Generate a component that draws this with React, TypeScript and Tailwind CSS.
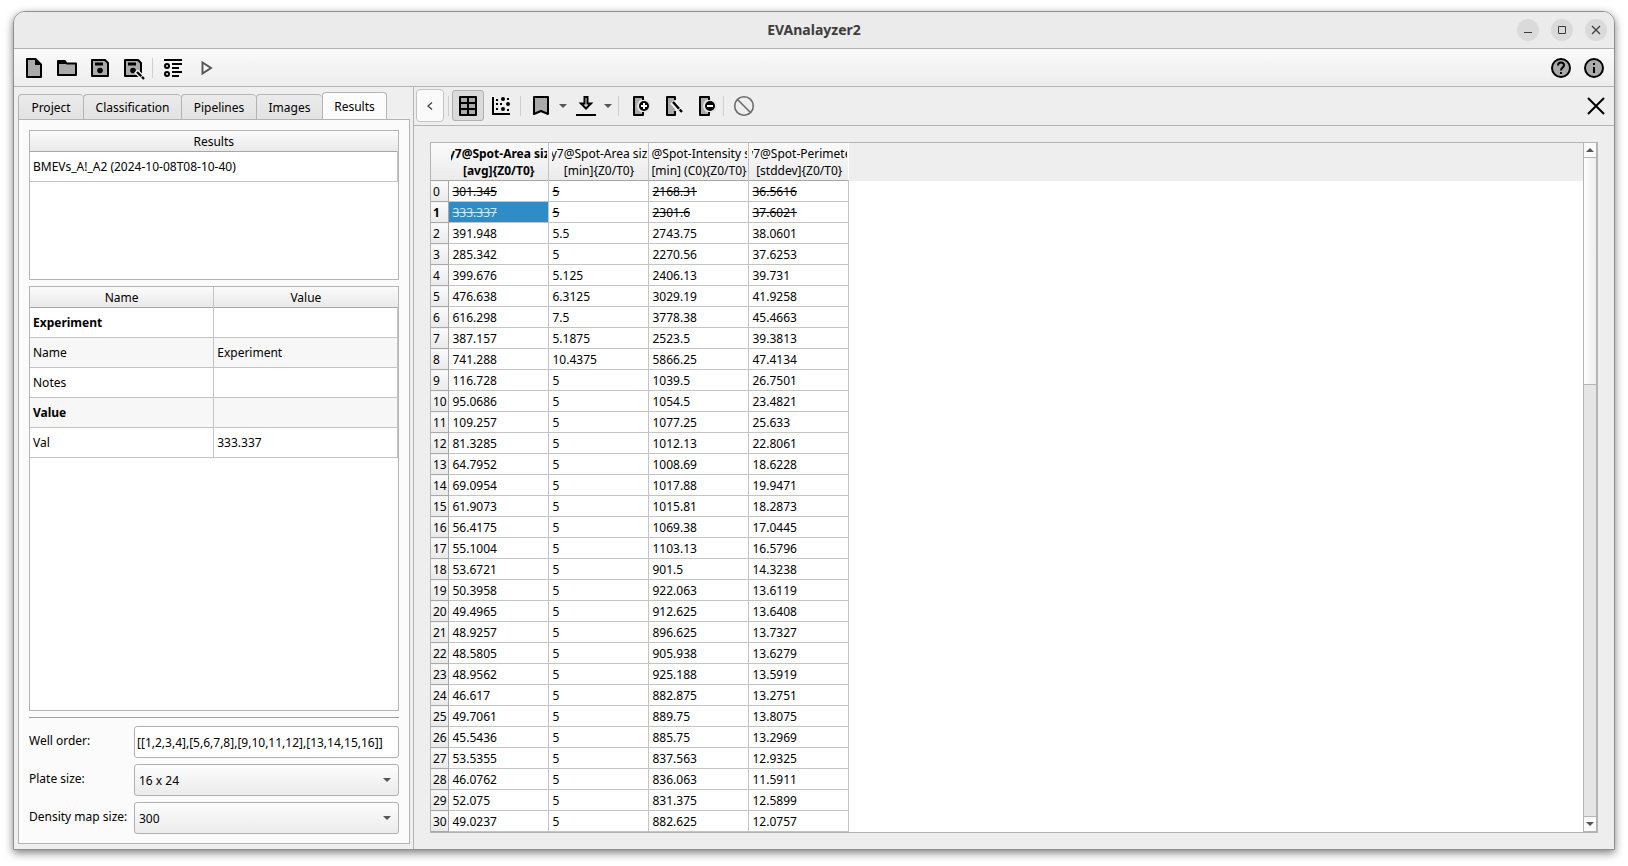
import type { ReactNode } from 'react'

type Row = [string, string, string, string]

const ROWS: Row[] = [
  ['301.345', '5', '2168.31', '36.5616'],
  ['333.337', '5', '2301.6', '37.6021'],
  ['391.948', '5.5', '2743.75', '38.0601'],
  ['285.342', '5', '2270.56', '37.6253'],
  ['399.676', '5.125', '2406.13', '39.731'],
  ['476.638', '6.3125', '3029.19', '41.9258'],
  ['616.298', '7.5', '3778.38', '45.4663'],
  ['387.157', '5.1875', '2523.5', '39.3813'],
  ['741.288', '10.4375', '5866.25', '47.4134'],
  ['116.728', '5', '1039.5', '26.7501'],
  ['95.0686', '5', '1054.5', '23.4821'],
  ['109.257', '5', '1077.25', '25.633'],
  ['81.3285', '5', '1012.13', '22.8061'],
  ['64.7952', '5', '1008.69', '18.6228'],
  ['69.0954', '5', '1017.88', '19.9471'],
  ['61.9073', '5', '1015.81', '18.2873'],
  ['56.4175', '5', '1069.38', '17.0445'],
  ['55.1004', '5', '1103.13', '16.5796'],
  ['53.6721', '5', '901.5', '14.3238'],
  ['50.3958', '5', '922.063', '13.6119'],
  ['49.4965', '5', '912.625', '13.6408'],
  ['48.9257', '5', '896.625', '13.7327'],
  ['48.5805', '5', '905.938', '13.6279'],
  ['48.9562', '5', '925.188', '13.5919'],
  ['46.617', '5', '882.875', '13.2751'],
  ['49.7061', '5', '889.75', '13.8075'],
  ['45.5436', '5', '885.75', '13.2969'],
  ['53.5355', '5', '837.563', '12.9325'],
  ['46.0762', '5', '836.063', '11.5911'],
  ['52.075', '5', '831.375', '12.5899'],
  ['49.0237', '5', '882.625', '12.0757'],
]

const COLUMNS = [
  { name: 'y7@Spot-Area siz', unit: '[avg]{Z0/T0}', align: 'justify-center' },
  { name: 'y7@Spot-Area siz', unit: '[min]{Z0/T0}', align: 'justify-center' },
  { name: '@Spot-Intensity s', unit: '[min] (C0){Z0/T0}', align: 'justify-start' },
  { name: 'y7@Spot-Perimete', unit: '[stddev]{Z0/T0}', align: 'justify-center' },
]

const DETAILS = [
  { name: 'Experiment', value: '', group: true },
  { name: 'Name', value: 'Experiment' },
  { name: 'Notes', value: '' },
  { name: 'Value', value: '', group: true },
  { name: 'Val', value: '333.337' },
]

const TABS = [
  { name: 'Project', width: 'w-[65px]' },
  { name: 'Classification', width: 'w-[98px]' },
  { name: 'Pipelines', width: 'w-[75px]' },
  { name: 'Images', width: 'w-[66px]' },
  { name: 'Results', width: 'w-[65px]' },
]

const SELECTED_ROW = 1
const EXCLUDED_ROWS = [0, 1]

const HEAD_BG = 'bg-linear-to-b from-[#fbfbfb] to-[#e9e9e9]'

function Icon({ children }: { children: ReactNode }) {
  return (
    <svg viewBox="0 0 24 24" className="size-6 shrink-0" fill="none" stroke="#000" strokeWidth="2" aria-hidden>
      {children}
    </svg>
  )
}

function ToolButton({ label, children }: { label: string; children: ReactNode }) {
  return (
    <button aria-label={label} className="flex size-[33px] shrink-0 items-center justify-center">
      <Icon>{children}</Icon>
    </button>
  )
}

function Separator() {
  return <div className="h-5 w-px shrink-0 bg-[#cfcfcf]" />
}

function Caret({ up = false }: { up?: boolean }) {
  return (
    <svg viewBox="0 0 8 4" className="h-1 w-2 shrink-0" fill="#555" aria-hidden>
      <path d={up ? 'M0 4L4 0L8 4Z' : 'M0 0H8L4 4Z'} />
    </svg>
  )
}

function WindowButton({ label, children }: { label: string; children: ReactNode }) {
  return (
    <button aria-label={label} className="flex size-[22px] items-center justify-center rounded-full bg-[#dadada]">
      <svg viewBox="0 0 10 10" className="size-[10px]" fill="none" stroke="#3d3d3d" aria-hidden>
        {children}
      </svg>
    </button>
  )
}

function TitleBar() {
  return (
    <header className="grid h-[37px] grid-cols-[1fr_auto_1fr] items-center border-b border-[#b4b4b4] bg-[#ebebeb] px-[7px]">
      <div />
      <h1 className="text-sm font-bold text-[#3d3d3d]">EVAnalayzer2</h1>
      <div className="flex justify-end gap-3">
        <WindowButton label="Minimize">
          <path d="M1 7.5H9" />
        </WindowButton>
        <WindowButton label="Maximize">
          <path d="M1.5 1.5H8.5V8.5H1.5Z" />
        </WindowButton>
        <WindowButton label="Close window">
          <path d="M1 1L9 9M9 1L1 9" strokeWidth="1.3" />
        </WindowButton>
      </div>
    </header>
  )
}

function DiskShape() {
  return (
    <>
      <path d="M4 4H17L20 7V20H4Z" fill="#aaa" strokeLinejoin="round" />
      <path d="M7 8H15" strokeWidth="3" />
      <circle cx="12" cy="14.5" r="2.8" fill="#000" stroke="none" />
    </>
  )
}

function MainToolbar() {
  return (
    <div className="flex h-[38px] items-center border-b border-[#b4b4b4] bg-linear-to-b from-[#fafafa] to-[#ededed] pt-px pr-1 pl-[3px]">
      <ToolButton label="New">
        <path d="M5 3H13.5L19 8.5V21H5Z" fill="#aaa" strokeLinejoin="round" />
        <path d="M13 3V9H19L13 3Z" fill="#000" stroke="none" />
      </ToolButton>
      <ToolButton label="Open">
        <path d="M3 5H9.5L11.5 7.5H21V19H3Z" fill="#aaa" strokeLinejoin="round" />
        <path d="M3 4H10L12 6.5V8H3Z" fill="#000" stroke="none" />
      </ToolButton>
      <ToolButton label="Save">
        <DiskShape />
      </ToolButton>
      <ToolButton label="Save as">
        <DiskShape />
        <path d="M15 15L23 23" stroke="#f2f2f2" strokeWidth="5" />
        <path d="M16 16L23 23" strokeDasharray="6 1 4" strokeWidth="2.4" />
      </ToolButton>
      <div className="w-[3px]" />
      <Separator />
      <div className="w-[3px]" />
      <ToolButton label="Pipeline list">
        <path d="M3 4H21M11 8H21M11 12H18M11 16H21M11 20H18" />
        <circle cx="6" cy="10" r="2" />
        <circle cx="6" cy="18" r="2" />
      </ToolButton>
      <ToolButton label="Run">
        <path d="M8.5 6.5V17.5L17 12Z" stroke="#555" strokeWidth="1.9" />
      </ToolButton>
      <div className="grow" />
      <ToolButton label="Help">
        <circle cx="12" cy="12" r="9" fill="#aaa" />
        <path d="M9 9.5C9 5.5 15 5.5 15 9.2C15 11.5 12 11.7 12 14.5M12 16V18" />
      </ToolButton>
      <ToolButton label="About">
        <circle cx="12" cy="12" r="9" fill="#aaa" />
        <path d="M12 7V9M12 11V17" />
      </ToolButton>
    </div>
  )
}

function TabBar() {
  return (
    <div role="tablist" className="-mb-px flex h-7 items-end">
      {TABS.map((tab) => {
        const active = tab.name === 'Results'
        return (
          <button
            key={tab.name}
            role="tab"
            aria-selected={active}
            className={`shrink-0 rounded-t-sm border border-[#b4b4b4] ${tab.width} ${
              active
                ? 'h-7 border-b-0 bg-[#fcfcfc] pt-px'
                : 'h-[26px] border-r-0 bg-linear-to-b from-[#ebebeb] to-[#e2e2e2] pt-[2px]'
            }`}
          >
            {tab.name}
          </button>
        )
      })}
    </div>
  )
}

function ResultsList() {
  return (
    <div className="h-[150px] shrink-0 border border-[#b4b4b4] bg-white">
      <table className="w-full border-collapse">
        <thead>
          <tr className={`h-[21px] border-b border-[#a8a8a8] ${HEAD_BG}`}>
            <th className="pt-[2px] font-normal">Results</th>
          </tr>
        </thead>
        <tbody>
          <tr className="h-[30px]">
            <td className="border-r border-b border-[#c4c4c4] px-[3px]">BMEVs_A!_A2 (2024-10-08T08-10-40)</td>
          </tr>
        </tbody>
      </table>
    </div>
  )
}

function DetailsTable() {
  return (
    <div className="min-h-0 grow border border-[#b4b4b4] bg-white">
      <table className="w-full table-fixed border-collapse">
        <thead>
          <tr className={`h-[21px] border-b border-[#a8a8a8] ${HEAD_BG}`}>
            <th className="border-r border-[#c4c4c4] pt-[2px] font-normal">Name</th>
            <th className="pt-[2px] font-normal">Value</th>
          </tr>
        </thead>
        <tbody>
          {DETAILS.map((item, i) => (
            <tr key={item.name + i} className="h-[30px] even:bg-[#f7f7f7]">
              <td className={`border-r border-b border-[#c4c4c4] px-[3px] ${item.group ? 'font-bold' : ''}`}>
                {item.name}
              </td>
              <td className="border-r border-b border-[#c4c4c4] px-[3px]">{item.value}</td>
            </tr>
          ))}
        </tbody>
      </table>
    </div>
  )
}

function SelectRow({ id, label, value }: { id: string; label: string; value: string }) {
  return (
    <>
      <label htmlFor={id} className="pb-[2px]">
        {label}
      </label>
      <div className="relative">
        <select
          id={id}
          defaultValue={value}
          className="h-8 w-full appearance-none rounded-[3px] border border-[#b0b0b0] bg-linear-to-b from-[#fdfdfd] to-[#ebebeb] px-1 pt-[2px]"
        >
          <option>{value}</option>
        </select>
        <div className="pointer-events-none absolute inset-y-0 right-2 flex items-center">
          <Caret />
        </div>
      </div>
    </>
  )
}

function Sidebar() {
  return (
    <aside className="flex w-[400px] shrink-0 flex-col border-r border-[#b4b4b4] bg-[#efefef] pt-[5px] pr-[3px] pb-[5px] pl-1">
      <TabBar />
      <div className="flex min-h-0 grow flex-col border border-[#b4b4b4] bg-[#fbfbfb] px-[10px] pt-[10px] pb-[9px]">
        <ResultsList />
        <div className="h-[6px] shrink-0" />
        <DetailsTable />
        <hr className="mt-[6px] mb-2 border-[#a0a0a0]" />
        <form className="grid grid-cols-[100px_1fr] items-center gap-x-[5px] gap-y-[6px]">
          <label htmlFor="well-order" className="pb-[2px]">
            Well order:
          </label>
          <input
            id="well-order"
            defaultValue="[[1,2,3,4],[5,6,7,8],[9,10,11,12],[13,14,15,16]]"
            className="h-8 w-full rounded-[3px] border border-[#b0b0b0] bg-white px-[2px]"
          />
          <SelectRow id="plate-size" label="Plate size:" value="16 x 24" />
          <SelectRow id="density" label="Density map size:" value="300" />
        </form>
      </div>
    </aside>
  )
}

function ResultsToolbar() {
  return (
    <div className="flex h-[39px] shrink-0 items-center border-b border-[#b4b4b4] pr-[2px] pl-[2px]">
      <button
        aria-label="Back"
        className="mr-1 flex h-[33px] w-7 items-center justify-center rounded-sm border border-[#c4c4c4] bg-[#fafafa]"
      >
        <svg viewBox="0 0 6 8" className="h-2 w-[6px]" fill="none" stroke="#444" strokeWidth="1.3" aria-hidden>
          <path d="M5 0.5L1 4L5 7.5" />
        </svg>
      </button>
      <Separator />
      <button
        aria-label="Table view"
        className="ml-[3px] flex h-[31px] w-8 items-center justify-center rounded-[3px] border border-[#b0b0b0] bg-[#dadada]"
      >
        <Icon>
          <path d="M4 3H20V21H4Z" fill="#aaa" strokeLinejoin="round" />
          <path d="M4 9H20M4 15H20M12 3V21" />
        </Icon>
      </button>
      <ToolButton label="Chart view">
        <path d="M4 3V20H21" />
        <g fill="#000" stroke="none">
          <circle cx="14" cy="5" r="2" />
          <circle cx="19" cy="10" r="2" />
          <circle cx="14" cy="15" r="2" />
          <path d="M7 5H9V7H7ZM7 9H9V11H7ZM7 14H9V16H7ZM11 9H13V11H11ZM18 4H20V6H18ZM18 15H20V17H18Z" />
        </g>
      </ToolButton>
      <div className="w-[3px]" />
      <Separator />
      <div className="w-[3px]" />
      <ToolButton label="Bookmark">
        <path d="M5 3H19V20L12 17L5 20Z" fill="#aaa" strokeLinejoin="round" />
      </ToolButton>
      <button aria-label="Bookmark options" className="flex w-3 justify-center">
        <Caret />
      </button>
      <ToolButton label="Export">
        <path d="M10.5 3H13.5V9.5H17L12 14.5L7 9.5H10.5Z" fill="#ddd" />
        <path d="M2 21H22" />
      </ToolButton>
      <button aria-label="Export options" className="flex w-3 justify-center">
        <Caret />
      </button>
      <div className="w-1" />
      <Separator />
      <div className="w-[5px]" />
      <ToolButton label="Add column">
        <path d="M5 3H13V21H5Z" fill="#aaa" stroke="none" />
        <circle cx="15" cy="12" r="7" fill="#e4e4e4" stroke="none" />
        <path d="M14 6V3H5V21H14V18" strokeLinejoin="round" />
        <circle cx="15" cy="12" r="5" fill="#000" stroke="none" />
        <path d="M15 9V15M12 12H18" stroke="#fff" />
      </ToolButton>
      <ToolButton label="Edit column">
        <path d="M5 3H13V21H5Z" fill="#aaa" stroke="none" />
        <path d="M10 8L19 18" stroke="#efefef" strokeWidth="5" />
        <path d="M13 6V3H5V21H13V17" strokeLinejoin="round" />
        <path d="M11 8L20 18" strokeDasharray="9 1 4" strokeWidth="2.4" />
      </ToolButton>
      <ToolButton label="Remove column">
        <path d="M5 3H13V21H5Z" fill="#aaa" stroke="none" />
        <circle cx="15" cy="12" r="7" fill="#e4e4e4" stroke="none" />
        <path d="M14 6V3H5V21H14V18" strokeLinejoin="round" />
        <circle cx="15" cy="12" r="5" fill="#000" stroke="none" />
        <path d="M12 12H18" stroke="#fff" />
      </ToolButton>
      <Separator />
      <div className="w-[3px]" />
      <ToolButton label="Exclude">
        <g stroke="#6b6b6b" strokeWidth="1.6">
          <circle cx="12" cy="12" r="9.3" />
          <path d="M5.5 5.5L18.5 18.5" />
        </g>
      </ToolButton>
      <div className="grow" />
      <ToolButton label="Close results">
        <path d="M4 4L20 20M20 4L4 20" />
      </ToolButton>
    </div>
  )
}

function DataTable() {
  return (
    <table className="w-[417px] shrink-0 table-fixed border-collapse self-start">
      <colgroup>
        <col className="w-[17px]" />
        {COLUMNS.map((_, i) => (
          <col key={i} className="w-[100px]" />
        ))}
      </colgroup>
      <thead>
        <tr className="h-[38px] border-b border-[#a8a8a8] bg-linear-to-b from-[#fbfbfb] to-[#ebebeb]">
          <th />
          {COLUMNS.map((col, i) => (
            <th
              key={i}
              className={`border-r border-[#c4c4c4] p-0 pr-px pl-[3px] leading-[17px] whitespace-nowrap last:border-r-0 ${
                i === 0 ? 'font-bold' : 'font-normal'
              }`}
            >
              <div className={`flex overflow-hidden ${col.align}`}>{col.name}</div>
              <div className="flex justify-center overflow-hidden">{col.unit}</div>
            </th>
          ))}
        </tr>
      </thead>
      <tbody>
        {ROWS.map((row, r) => (
          <tr key={r} className="h-[21px]">
            <th
              className={`border-r border-b border-[#a8a8a8] p-0 pt-[2px] pl-[2px] text-left ${HEAD_BG} ${
                r === SELECTED_ROW ? 'font-bold' : 'font-normal'
              }`}
            >
              {r}
            </th>
            {row.map((value, c) => (
              <td
                key={c}
                className={`border-r border-b border-[#c4c4c4] p-0 pt-[2px] pl-1 ${
                  EXCLUDED_ROWS.includes(r) ? 'line-through' : ''
                } ${r === SELECTED_ROW && c === 0 ? 'bg-[#308cc6] text-[#d5e6f2]' : ''}`}
              >
                {value}
              </td>
            ))}
          </tr>
        ))}
      </tbody>
    </table>
  )
}

function ScrollBar() {
  return (
    <div className="flex w-[14px] shrink-0 flex-col border-x border-[#b4b4b4] bg-[#e5e5e5]">
      <button aria-label="Scroll up" className="flex h-[15px] items-center justify-center border-b border-[#b4b4b4] bg-[#fafafa]">
        <Caret up />
      </button>
      <div className="grow">
        <div className="h-[227px] border-b border-[#b4b4b4] bg-linear-to-r from-[#fdfdfd] to-[#eeeeee]" />
      </div>
      <button aria-label="Scroll down" className="flex h-4 items-center justify-center border-y border-[#b4b4b4] bg-[#fafafa]">
        <Caret />
      </button>
    </div>
  )
}

function ResultsView() {
  return (
    <main className="flex min-w-0 grow flex-col bg-[#eeeeee]">
      <ResultsToolbar />
      <div className="m-4 flex min-h-0 grow overflow-hidden border border-[#b4b4b4] bg-white">
        <DataTable />
        <div className="grow">
          <div className="h-[38px] bg-[#eeeeee]" />
        </div>
        <ScrollBar />
      </div>
    </main>
  )
}

export default function App() {
  return (
    <div className="flex h-screen bg-white px-[13px] pt-[11px] pb-4 font-['Noto_Sans',sans-serif] text-xs text-black">
      <div className="flex grow flex-col overflow-hidden rounded-t-xl border border-[#8f8f8f] bg-[#efefef] shadow-[0_3px_8px_rgba(0,0,0,0.5)]">
        <TitleBar />
        <MainToolbar />
        <div className="flex min-h-0 grow">
          <Sidebar />
          <ResultsView />
        </div>
      </div>
    </div>
  )
}
